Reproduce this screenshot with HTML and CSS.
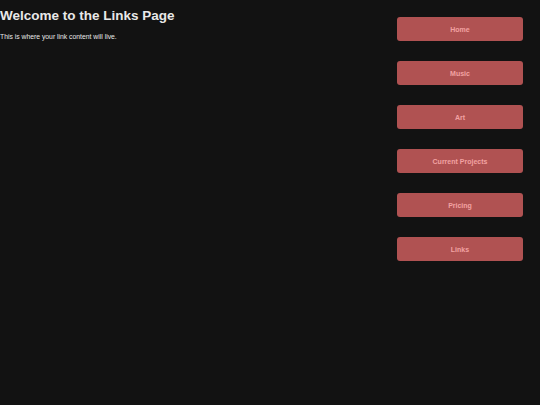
FILE: index.html
```html
<!DOCTYPE html>
<html>
<head>
<meta charset="utf-8">
<link rel="stylesheet" href="styles.css">
</head>
<body>
<div class="page">
  <main class="content">
    <h1 class="title">Welcome to the Links Page</h1>
    <p class="intro">This is where your link content will live.</p>
  </main>
  <nav class="nav">
    <a class="btn" href="#">Home</a>
    <a class="btn" href="#">Music</a>
    <a class="btn" href="#">Art</a>
    <a class="btn" href="#">Current Projects</a>
    <a class="btn" href="#">Pricing</a>
    <a class="btn" href="#">Links</a>
  </nav>
</div>
</body>
</html>
```
FILE: styles.css
```css
html, body {
  margin: 0;
  padding: 0;
  background: #121212;
  height: 100%;
}
body {
  font-family: "Liberation Sans", Arial, sans-serif;
  color: #e8e8e8;
}
.page {
  display: flex;
  justify-content: space-between;
  align-items: flex-start;
}
.content {
  padding-top: 8px;
}
.title {
  margin: 0;
  font-size: 13.5px;
  font-weight: bold;
  line-height: 16px;
}
.intro {
  margin: 9px 0 0;
  font-size: 6.8px;
  line-height: 8px;
}
.nav {
  display: flex;
  flex-direction: column;
  gap: 20px;
  padding: 17px 17px 0 0;
  width: 126px;
}
.btn {
  display: flex;
  align-items: center;
  justify-content: center;
  height: 24px;
  background: #b05252;
  border-radius: 3px;
  color: #f2a2a2;
  font-size: 7px;
  font-weight: bold;
  text-decoration: none;
}
```
